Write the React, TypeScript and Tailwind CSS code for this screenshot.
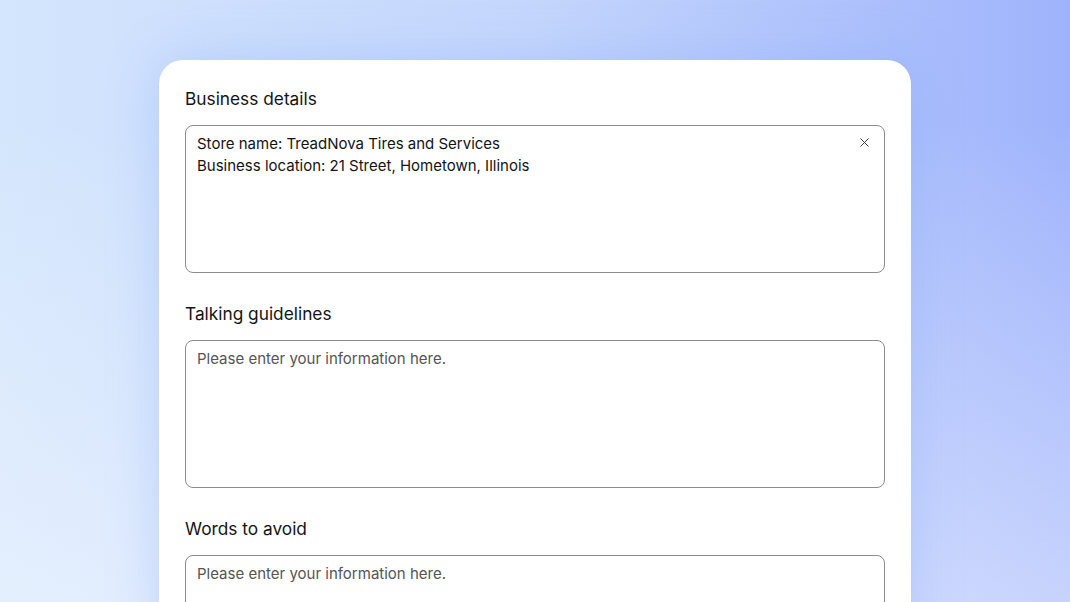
import { X } from "lucide-react";

interface FieldProps {
  label: string;
  value?: string;
  clearable?: boolean;
}

const Field = ({ label, value, clearable }: FieldProps) => (
  <div className="flex flex-col">
    <label className="text-[17.3px] leading-6 text-[#141414] mb-[14px]">{label}</label>
    <div className="relative">
      <textarea
        defaultValue={value}
        placeholder="Please enter your information here."
        className="block w-full h-[148px] resize-none rounded-lg border border-[#8c8c8c] bg-white pl-[11px] pr-10 pt-[7px] text-[15px] leading-[22px] text-[#141414] placeholder:text-[#555] outline-none"
      />
      {clearable && (
        <button className="absolute right-[13px] top-[10px] text-[#333]">
          <X size={15} strokeWidth={1.5} />
        </button>
      )}
    </div>
  </div>
);

const App = () => {
  return (
    <div
      className="w-[1070px] h-[602px] overflow-hidden bg-[linear-gradient(to_bottom,rgba(248,250,255,0)_20%,rgba(248,250,255,0.45)_100%),linear-gradient(to_right,#d4e6fd,#c4d6fc_50%,#9fb3fc)] pt-[60px] flex justify-center"
      style={{ fontFamily: "Inter, 'Noto Sans', sans-serif" }}
    >
      <div
        className="w-[752px] bg-white rounded-t-[24px] px-[26px] flex flex-col gap-[29px] h-[600px] shadow-[0_0_50px_rgba(130,165,250,0.35)]"
        style={{ paddingTop: 27 }}
      >
        <Field
          label="Business details"
          value={"Store name: TreadNova Tires and Services\nBusiness location: 21 Street, Hometown, Illinois"}
          clearable
        />
        <Field label="Talking guidelines" />
        <Field label="Words to avoid" />
      </div>
    </div>
  );
};

export default App;
